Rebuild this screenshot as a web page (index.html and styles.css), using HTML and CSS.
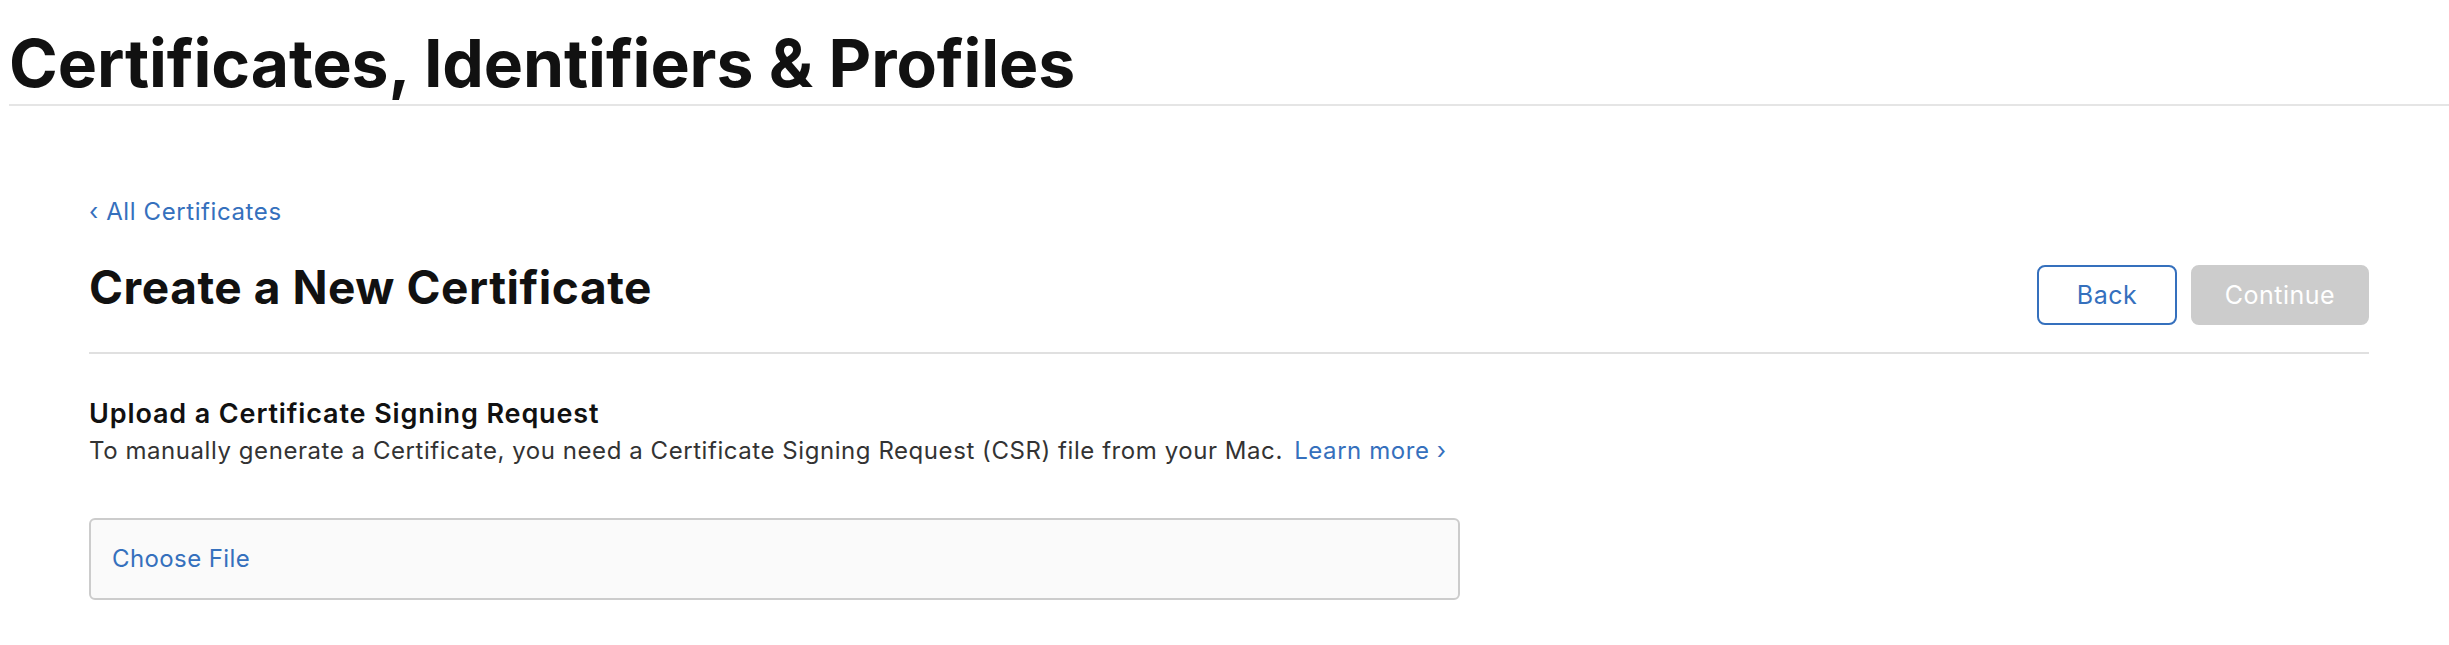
FILE: index.html
```html
<!DOCTYPE html>
<html lang="en">
<head>
<meta charset="utf-8">
<title>Certificates, Identifiers &amp; Profiles</title>
<link rel="stylesheet" href="styles.css">
</head>
<body>
<header class="site-header">
  <h1 class="site-title">Certificates, Identifiers &amp; Profiles</h1>
</header>
<main class="content">
  <a class="back-link" href="#">&lsaquo; All Certificates</a>
  <div class="page-head">
    <h2 class="page-title">Create a New Certificate</h2>
    <div class="actions">
      <button class="btn btn-outline" type="button">Back</button>
      <button class="btn btn-disabled" type="button" disabled>Continue</button>
    </div>
  </div>
  <section class="upload">
    <h3 class="upload-title">Upload a Certificate Signing Request</h3>
    <p class="upload-desc">To manually generate a Certificate, you need a Certificate Signing Request (CSR) file from your Mac. <a class="link" href="#">Learn more &rsaquo;</a></p>
    <div class="file-box"><span class="file-choose">Choose File</span></div>
  </section>
</main>
</body>
</html>
```

FILE: styles.css
```css
* { box-sizing: border-box; }
html, body { margin: 0; padding: 0; background: #fff; }
body {
  font-family: Inter, "Noto Sans", "Liberation Sans", sans-serif;
  color: #111;
}
.site-header {
  margin-left: 9px;
  padding-top: 27px;
  padding-bottom: 5px;
  border-bottom: 2px solid #e5e5e5;
}
.site-title {
  margin: 0;
  font-size: 66px;
  line-height: 72px;
  font-weight: 700;
  letter-spacing: -0.1px;
  color: #111;
}
.content {
  margin: 0 80px 0 89px;
  padding-top: 90px;
}
.back-link {
  display: block;
  font-size: 24px;
  line-height: 32px;
  letter-spacing: 0.6px;
  color: #3570bd;
  text-decoration: none;
}
.page-head {
  display: flex;
  justify-content: space-between;
  align-items: baseline;
  margin-top: 32px;
  padding-bottom: 27px;
  border-bottom: 2px solid #e0e0e0;
}
.page-title {
  margin: 0;
  font-size: 46px;
  line-height: 54px;
  font-weight: 700;
  letter-spacing: 0.55px;
  color: #111;
}
.actions {
  display: flex;
  gap: 14px;
  align-items: baseline;
}
.btn {
  font-family: inherit;
  font-size: 25px;
  line-height: 56px;
  height: 60px;
  border-radius: 8px;
  padding: 0;
  letter-spacing: 0.5px;
  border: 2px solid transparent;
  background: none;
}
.btn-outline {
  width: 140px;
  color: #3570bd;
  border-color: #3570bd;
  background: #fff;
}
.btn-disabled {
  width: 178px;
  color: #fff;
  background: #cccccc;
  border-color: #cccccc;
}
.upload { padding-top: 43px; }
.upload-title {
  margin: 0;
  font-size: 27px;
  line-height: 34px;
  font-weight: 600;
  letter-spacing: 0.87px;
  color: #111;
}
.upload-desc {
  margin: 4px 0 0;
  font-size: 24px;
  line-height: 32px;
  letter-spacing: 0.56px;
  color: #333;
}
.link { color: #3570bd; text-decoration: none; margin-left: 4px; }
.file-box {
  margin-top: 51px;
  width: 1371px;
  height: 82px;
  display: flex;
  align-items: center;
  padding-left: 21px;
  background: #fafafa;
  border: 2px solid #cccccc;
  border-radius: 6px;
}
.file-choose {
  font-size: 24px;
  line-height: 32px;
  letter-spacing: 0.4px;
  color: #3570bd;
}
```
